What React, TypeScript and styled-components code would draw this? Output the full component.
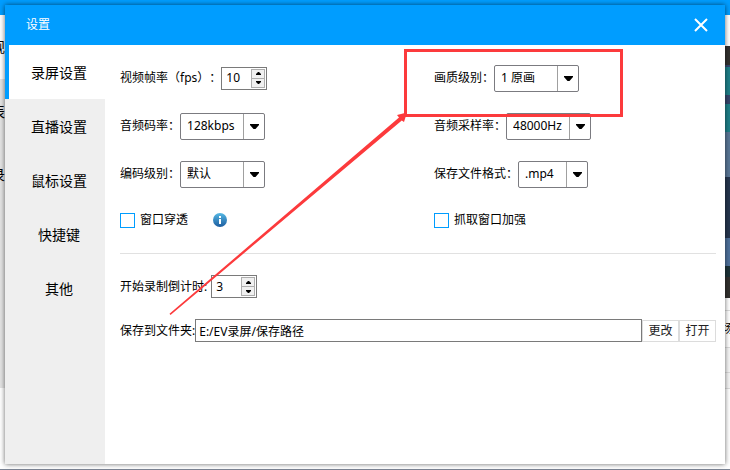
import React, { useId, useState } from 'react';
import styled, { createGlobalStyle } from 'styled-components';

const blue = '#009dff';
const red = '#fc3a3c';

const GlobalStyle = createGlobalStyle`
  * { box-sizing: border-box; }
  body {
    margin: 0;
    color: #000;
    font: 12px/16px "Noto Sans", "Noto Sans CJK SC", sans-serif;
    text-spacing-trim: space-all;
  }
  button, input, select { font: inherit; color: inherit; }
`;

const Desktop = styled.div`
  position: relative;
  display: flex;
  min-height: 100vh;
  padding: 5px 5px 6px;
  overflow: hidden;
`;

const Backdrop = styled.div`
  position: absolute;
  inset: 0;
  display: flex;
  flex-direction: column;
  background: #fff;
`;

const BackdropBar = styled.div`
  height: 15px;
  background: ${blue};
`;

const BackdropBody = styled.div`
  flex: 1;
  display: flex;
  justify-content: space-between;
`;

const BackdropFoot = styled.div`
  height: 1px;
  background: #7b8494;
`;

const Strip = styled.div`
  display: flex;
  flex-direction: column;
  width: 5px;
  overflow: hidden;
`;

const Band = styled.div<{ $height: number; $fill?: string }>`
  display: flex;
  flex-shrink: 0;
  justify-content: flex-end;
  align-items: center;
  height: ${p => p.$height}px;
  background: ${p => p.$fill ?? '#fff'};
  font-size: 14px;
`;

const RightBand = styled(Band)`
  justify-content: center;
  font-size: 12px;
`;

const LinedBand = styled(RightBand)`
  border: solid #dcdcdc;
  border-width: 1px 0;
`;

const Dialog = styled.main`
  position: relative;
  flex: 1;
  display: flex;
  flex-direction: column;
  background: #fff;
  box-shadow: 0 0 5px rgba(0, 0, 0, 0.6);
`;

const TitleBar = styled.header`
  display: flex;
  align-items: center;
  justify-content: space-between;
  height: 40px;
  padding: 0 16px 0 21px;
  background: ${blue};
  color: #fff;
`;

const Title = styled.h1`
  margin: 0;
  font-size: 12px;
  font-weight: 400;
`;

const CloseButton = styled.button`
  display: flex;
  padding: 0;
  border: 0;
  background: none;
`;

const Body = styled.div`
  flex: 1;
  display: flex;
`;

const Sidebar = styled.nav`
  display: flex;
  flex-direction: column;
  width: 100px;
  background: #efefef;
`;

const Tab = styled.button<{ $active: boolean }>`
  height: 54px;
  padding: 2px 0 0 4px;
  border: 0;
  border-left: 4px solid ${p => (p.$active ? blue : 'transparent')};
  background: ${p => (p.$active ? '#fff' : 'transparent')};
  font-size: 14px;
`;

const Content = styled.section`
  flex: 1;
  min-width: 0;
  padding: 9px 9px 0 15px;
`;

const OptionGrid = styled.div`
  display: grid;
  grid-template-columns: 314px 1fr;
  grid-template-rows: repeat(3, 48px) 44px;
  align-items: center;
`;

const Field = styled.div<{ $gap?: number }>`
  display: flex;
  align-items: center;
  gap: ${p => p.$gap ?? 0}px;
  white-space: nowrap;
`;

const Divider = styled.hr`
  height: 1px;
  margin: 11px 0 21px;
  border: 0;
  background: #e1e1e1;
`;

const SelectBox = styled.span<{ $width: number }>`
  display: grid;
  grid-template-columns: 1fr 21px;
  width: ${p => p.$width}px;
  height: 27px;
  border: 1px solid #7b7b80;
  border-radius: 2px;
  background: #fff;
`;

const NativeSelect = styled.select`
  grid-area: 1 / 1 / 2 / 3;
  min-width: 0;
  padding: 0 0 0 6px;
  border: 0;
  outline: 0;
  appearance: none;
  background: transparent;
`;

const SelectArrow = styled.span`
  grid-area: 1 / 2 / 2 / 3;
  display: flex;
  align-items: center;
  justify-content: center;
  border-left: 1px solid #a0a0a0;
  pointer-events: none;
`;

const SpinBox = styled.span`
  display: flex;
  width: 46px;
  height: 23px;
  padding: 1px;
  border: 1px solid #7a7a7a;
  background: #fff;
`;

const SpinInput = styled.input`
  flex: 1;
  min-width: 0;
  padding: 0 0 0 3px;
  border: 0;
  outline: 0;
  appearance: textfield;
  &::-webkit-inner-spin-button { appearance: none; margin: 0; }
`;

const SpinButtons = styled.span`
  display: flex;
  flex-direction: column;
  width: 14px;
`;

const SpinButton = styled.button`
  flex: 1;
  display: flex;
  align-items: center;
  justify-content: center;
  padding: 0;
  border: 1px solid #adadad;
  background: #f0f0f0;
  & + & { margin-top: -1px; }
`;

const CheckLabel = styled.label`
  display: flex;
  align-items: center;
  gap: 5px;
`;

const CheckBox = styled.input`
  width: 15px;
  height: 15px;
  margin: 0;
  border: 1px solid ${blue};
  appearance: none;
  background: #fff;
  &:checked { background: ${blue}; }
`;

const InfoButton = styled.button`
  display: flex;
  margin-left: 25px;
  padding: 0;
  border: 0;
  background: none;
`;

const PathRow = styled(Field)`
  margin-top: 21px;
`;

const PathInput = styled.input`
  flex: 1;
  min-width: 0;
  height: 23px;
  padding: 0 3px;
  border: 1px solid #7a7a7a;
  outline: 0;
`;

const PathButton = styled.button`
  width: 37px;
  height: 22px;
  padding: 0;
  border: 1px solid #dcdcdc;
  background: #fff;
  color: #222;
`;

const Highlight = styled.div`
  position: absolute;
  top: 44px;
  left: 399px;
  width: 219px;
  height: 68px;
  border: 3px solid ${red};
  pointer-events: none;
`;

const Pointer = styled.svg`
  position: absolute;
  top: 105px;
  left: 160px;
  pointer-events: none;
`;

function Select({ label, options, width }: { label: string; options: string[]; width: number }) {
  const id = useId();
  return (
    <Field>
      <label htmlFor={id}>{label}</label>
      <SelectBox $width={width}>
        <NativeSelect id={id}>
          {options.map(o => <option key={o}>{o}</option>)}
        </NativeSelect>
        <SelectArrow>
          <svg width="9" height="5" viewBox="0 0 9 5"><path d="M0 0h9v1L5.5 5h-2L0 1z" /></svg>
        </SelectArrow>
      </SelectBox>
    </Field>
  );
}

function Spinner({ label, initial, gap }: { label: string; initial: number; gap?: number }) {
  const id = useId();
  const [value, setValue] = useState(initial);
  return (
    <Field $gap={gap}>
      <label htmlFor={id}>{label}</label>
      <SpinBox>
        <SpinInput id={id} type="number" value={value} onChange={e => setValue(Number(e.target.value))} />
        <SpinButtons>
          <SpinButton aria-label="增加" onClick={() => setValue(value + 1)}>
            <svg width="5" height="3" viewBox="0 0 5 3"><path d="M0 3V2l2-2h1l2 2v1z" /></svg>
          </SpinButton>
          <SpinButton aria-label="减少" onClick={() => setValue(value - 1)}>
            <svg width="5" height="3" viewBox="0 0 5 3"><path d="M0 0v1l2 2h1l2-2V0z" /></svg>
          </SpinButton>
        </SpinButtons>
      </SpinBox>
    </Field>
  );
}

const tabs = ['录屏设置', '直播设置', '鼠标设置', '快捷键', '其他'];

export default function App() {
  const [active, setActive] = useState(tabs[0]);
  const pathId = useId();
  return (
    <Desktop>
      <GlobalStyle />
      <Backdrop aria-hidden="true">
        <BackdropBar />
        <BackdropBody>
          <Strip>
            <Band $height={64}>规</Band>
            <Band $height={66} $fill="#e4e4e4">表</Band>
            <Band $height={60} $fill="#e4e4e4">录</Band>
            <Band $height={183} $fill="#e4e4e4" />
          </Strip>
          <Strip>
            <RightBand $height={31} />
            <RightBand $height={19} $fill="#33312f" />
            <RightBand $height={2} $fill="#36466b" />
            <RightBand $height={28} $fill="#1f7f88" />
            <RightBand $height={9} $fill="#36466b" />
            <RightBand $height={28} $fill="#1f7f88" />
            <RightBand $height={45} $fill="#5a7696" />
            <RightBand $height={61} $fill="#26364f" />
            <RightBand $height={28} $fill="#4f719b" />
            <RightBand $height={11} $fill="#1d3338" />
            <RightBand $height={21} $fill="#33312f" />
            <RightBand $height={12} />
            <LinedBand $height={38}>场</LinedBand>
            <RightBand $height={24} $fill="#f6f6f6" />
            <LinedBand $height={17} $fill="#f6f6f6" />
          </Strip>
        </BackdropBody>
        <BackdropFoot />
      </Backdrop>

      <Dialog>
        <TitleBar>
          <Title>设置</Title>
          <CloseButton aria-label="关闭">
            <svg width="16" height="16" viewBox="0 0 16 16" stroke="#fff" strokeWidth="2">
              <path d="M2 2l12 12M14 2L2 14" />
            </svg>
          </CloseButton>
        </TitleBar>
        <Body>
          <Sidebar>
            {tabs.map(t => (
              <Tab key={t} $active={t === active} onClick={() => setActive(t)}>{t}</Tab>
            ))}
          </Sidebar>
          <Content>
            <OptionGrid>
              <Spinner label="视频帧率（fps）：" initial={10} />
              <Select label="画质级别：" options={['1 原画']} width={85} />
              <Select label="音频码率：" options={['128kbps']} width={85} />
              <Select label="音频采样率：" options={['48000Hz']} width={85} />
              <Select label="编码级别：" options={['默认']} width={85} />
              <Select label="保存文件格式：" options={['.mp4']} width={70} />
              <Field>
                <CheckLabel><CheckBox type="checkbox" />窗口穿透</CheckLabel>
                <InfoButton aria-label="说明">
                  <svg width="14" height="14" viewBox="0 0 14 14">
                    <defs>
                      <linearGradient id="info" x1="0" y1="0" x2="0" y2="1">
                        <stop offset="0" stopColor="#55b8e4" />
                        <stop offset="1" stopColor="#1c5c9f" />
                      </linearGradient>
                    </defs>
                    <circle cx="7" cy="7" r="7" fill="url(#info)" />
                    <path d="M6 3h2v2H6zM6 6h2v5H6z" fill="#fff" />
                  </svg>
                </InfoButton>
              </Field>
              <CheckLabel><CheckBox type="checkbox" />抓取窗口加强</CheckLabel>
            </OptionGrid>
            <Divider />
            <Spinner label="开始录制倒计时:" initial={3} gap={4} />
            <PathRow>
              <label htmlFor={pathId}>保存到文件夹:</label>
              <PathInput id={pathId} defaultValue="E:/EV录屏/保存路径" />
              <PathButton>更改</PathButton>
              <PathButton>打开</PathButton>
            </PathRow>
          </Content>
        </Body>
        <Highlight />
        <Pointer width="250" height="210" viewBox="165 110 250 210" fill={red}>
          <path d="M169.500 313.800L399 117.500L397 115L407 112.500L404 122L401.800 120.500L170.500 315z" />
        </Pointer>
      </Dialog>
    </Desktop>
  );
}
